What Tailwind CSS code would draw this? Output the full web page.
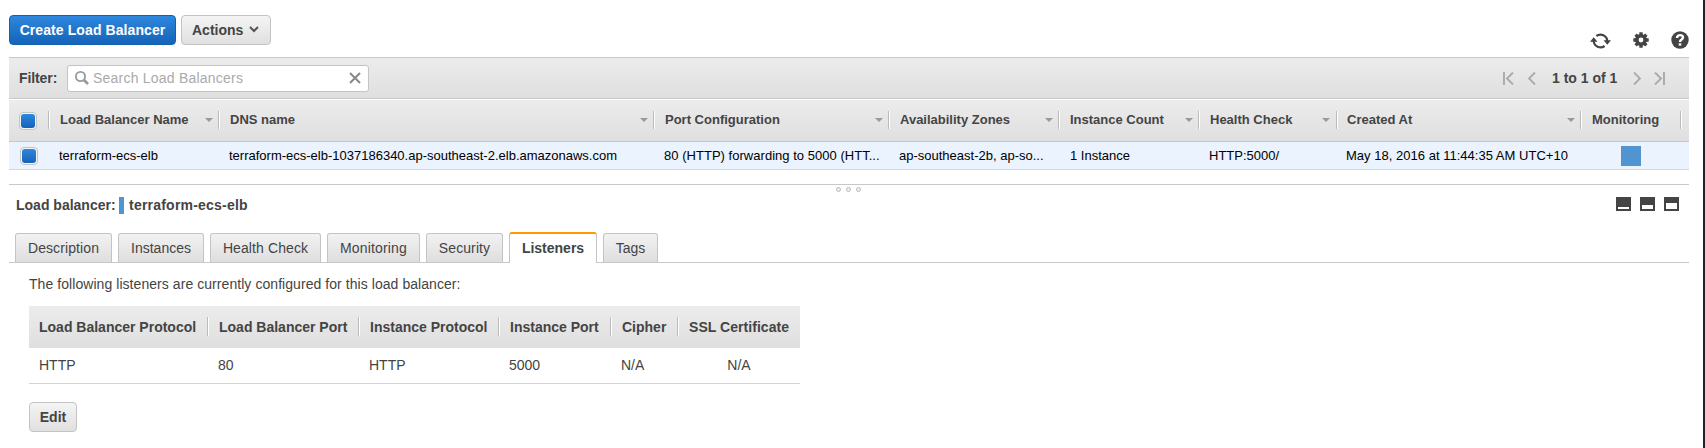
<!DOCTYPE html>
<html lang="en">
<head>
<meta charset="utf-8">
<title>Load Balancers</title>
<script src="https://cdn.jsdelivr.net/npm/@tailwindcss/browser@4"></script>
</head>
<body class="h-[448px] overflow-hidden bg-white font-['Liberation_Sans',Arial,sans-serif] text-[14px] leading-5 text-[#444]">
<div class="flex h-full flex-col whitespace-nowrap border-r-2 border-[#222] pl-[9px] pr-[14px]">

  <!-- Toolbar -->
  <header class="flex h-[57px] shrink-0 items-start justify-between">
    <div class="flex gap-[5px] pt-[15px] font-bold">
      <button class="h-[30px] w-[167px] rounded-[4px] border border-[#1360b0] bg-linear-to-b from-[#2e87de] to-[#1464b8] pb-px tracking-[0.09px] text-white">Create Load Balancer</button>
      <button class="flex h-[30px] w-[90px] items-center rounded-[4px] border border-[#c3c3c3] bg-linear-to-b from-[#f4f4f4] to-[#e0e0e0] pl-[10px]"><span class="w-[51px] text-left">Actions</span>
        <svg class="mb-[2px] ml-[6px] h-[7px] w-[10px]" viewBox="0 0 10 7" fill="none" stroke="#555" stroke-width="2"><path d="M1 1l4 4 4-4"/></svg>
      </button>
    </div>
    <div class="flex items-center pt-[31px]">
      <svg class="mt-px h-[18px] w-[21px]" viewBox="0 0 21 18"><g fill="none" stroke="#444" stroke-width="2.2"><path d="M6.400 4A6.800 6.800 0 0 1 17.300 9"/><path d="M14.600 14A6.800 6.800 0 0 1 3.700 9"/></g><path fill="#444" d="M13.500 8.300h7.500l-3.700 4.400zM0 9.700h7.500L3.700 5.300z"/></svg>
      <svg class="mb-[2px] ml-[22px] h-4 w-4" viewBox="0 0 16 16" fill="none" stroke="#444"><circle cx="8" cy="8" r="4.200" stroke-width="3.600"/><path stroke-width="3.400" d="M8 .3v3M8 12.700v3M.3 8h3M12.700 8h3M2.600 2.600l2 2M11.400 11.400l2 2M13.400 2.600l-2 2M4.600 11.400l-2 2"/></svg>
      <svg class="mb-px ml-[22px] h-[18px] w-[18px]" viewBox="0 0 18 18"><circle cx="9" cy="9" r="8.700" fill="#444"/><path fill="none" stroke="#fff" stroke-width="2.400" d="M6 7c0-4 6-3.600 6-.4 0 2-3 2-3 4.400"/><path fill="#fff" d="M7.700 12.300h2.600v2.300H7.700z"/></svg>
    </div>
  </header>

  <!-- Filter bar -->
  <section class="flex h-[42px] shrink-0 items-center justify-between border-y border-[#c8c8c8] bg-linear-to-b from-[#ececec] to-[#dfdfdf] font-bold">
    <div class="flex items-center pl-[10px]">
      <span class="w-[48px] tracking-[-0.1px]">Filter:</span>
      <div class="flex h-[27px] w-[302px] items-center rounded-[3px] border border-[#c4c4c4] bg-white px-[7px] font-normal text-[#aaa]">
        <svg class="h-[14px] w-[14px]" viewBox="0 0 14 14" fill="none" stroke="#999"><circle cx="5.500" cy="5.500" r="4.600" stroke-width="1.800"/><path stroke-width="2.600" d="M9 9l4 4"/></svg>
        <span class="ml-[4px] tracking-[0.22px]">Search Load Balancers</span>
        <svg class="ml-auto h-3 w-3" viewBox="0 0 12 12" stroke="#888" stroke-width="2"><path d="M1 1l10 10M11 1L1 11"/></svg>
      </div>
    </div>
    <div class="flex items-center pr-[24px]">
      <svg class="h-[13px] w-[11px]" viewBox="0 0 11 13" fill="none" stroke="#aaa" stroke-width="1.900"><path d="M1 0v13M10 .5l-6 6 6 6"/></svg>
      <svg class="ml-[14px] h-[13px] w-[8px]" viewBox="0 0 8 13" fill="none" stroke="#aaa" stroke-width="1.900"><path d="M7 .5l-6 6 6 6"/></svg>
      <span class="ml-[16px] w-[81px]">1 to 1 of 1</span>
      <svg class="h-[13px] w-[8px]" viewBox="0 0 8 13" fill="none" stroke="#aaa" stroke-width="1.900"><path d="M1 .5l6 6-6 6"/></svg>
      <svg class="ml-[13px] h-[13px] w-[11px]" viewBox="0 0 11 13" fill="none" stroke="#aaa" stroke-width="1.900"><path d="M10 0v13M1 .5l6 6-6 6"/></svg>
    </div>
  </section>

  <!-- Load balancer grid -->
  <section class="shrink-0 text-[13px]">
    <div class="grid h-[43px] grid-cols-[41px_170px_435px_235px_170px_140px_138px_244px_100px_7px] items-center border-b border-t border-b-[#c8c8c8] border-t-white bg-linear-to-b from-[#ececec] to-[#dfdfdf] pb-px font-bold leading-[18px]">
      <div class="flex h-[18px] items-center border-r border-white pl-[10px] shadow-[inset_-1px_0_#bbb]"><i class="mt-px h-[18px] w-[18px] shrink-0 rounded-[4px] border border-[#c4c4c4] bg-[#f4f4f4] p-px"><i class="block h-[14px] w-[14px] rounded-[3px] bg-linear-to-b from-[#2e87de] to-[#1464b8]"></i></i></div>
      <div class="flex h-[18px] items-center justify-between border-r border-white pl-[10px] pr-[6px] shadow-[inset_-1px_0_#bbb]"><span>Load Balancer Name</span><i class="border-x-4 border-t-4 border-x-transparent border-t-[#999]"></i></div>
      <div class="flex h-[18px] items-center justify-between border-r border-white pl-[10px] pr-[6px] shadow-[inset_-1px_0_#bbb]"><span>DNS name</span><i class="border-x-4 border-t-4 border-x-transparent border-t-[#999]"></i></div>
      <div class="flex h-[18px] items-center justify-between border-r border-white pl-[10px] pr-[6px] shadow-[inset_-1px_0_#bbb]"><span>Port Configuration</span><i class="border-x-4 border-t-4 border-x-transparent border-t-[#999]"></i></div>
      <div class="flex h-[18px] items-center justify-between border-r border-white pl-[10px] pr-[6px] shadow-[inset_-1px_0_#bbb]"><span>Availability Zones</span><i class="border-x-4 border-t-4 border-x-transparent border-t-[#999]"></i></div>
      <div class="flex h-[18px] items-center justify-between border-r border-white pl-[10px] pr-[6px] shadow-[inset_-1px_0_#bbb]"><span>Instance Count</span><i class="border-x-4 border-t-4 border-x-transparent border-t-[#999]"></i></div>
      <div class="flex h-[18px] items-center justify-between border-r border-white pl-[10px] pr-[7px] shadow-[inset_-1px_0_#bbb]"><span>Health Check</span><i class="border-x-4 border-t-4 border-x-transparent border-t-[#999]"></i></div>
      <div class="flex h-[18px] items-center justify-between border-r border-white pl-[9px] pr-[6px] shadow-[inset_-1px_0_#bbb]"><span>Created At</span><i class="border-x-4 border-t-4 border-x-transparent border-t-[#999]"></i></div>
      <div class="flex h-[18px] items-center border-r border-white pl-[10px] shadow-[inset_-1px_0_#bbb]"><span>Monitoring</span></div>
    </div>
    <div class="grid h-[28px] grid-cols-[41px_170px_435px_235px_170px_140px_138px_244px_100px_7px] items-center border-b border-[#d5d9df] bg-[#eaf3fe] text-black">
      <div class="flex pl-[11px]"><i class="h-[18px] w-[18px] rounded-[4px] border border-[#c4c4c4] bg-[#f4f4f4] p-px"><i class="block h-[14px] w-[14px] rounded-[3px] bg-linear-to-b from-[#2e87de] to-[#1464b8]"></i></i></div>
      <div class="pl-[9px]">terraform-ecs-elb</div>
      <div class="pl-[9px]">terraform-ecs-elb-1037186340.ap-southeast-2.elb.amazonaws.com</div>
      <div class="pl-[9px] tracking-[0.03px]">80 (HTTP) forwarding to 5000 (HTT...</div>
      <div class="pl-[9px]">ap-southeast-2b, ap-so...</div>
      <div class="pl-[10px]">1 Instance</div>
      <div class="pl-[9px]">HTTP:5000/</div>
      <div class="pl-[8px] tracking-[0.02px]">May 18, 2016 at 11:44:35 AM UTC+10</div>
      <div class="flex pl-[39px]"><i class="h-5 w-5 bg-[#5294cf]"></i></div>
    </div>
  </section>

  <!-- Pane splitter -->
  <div class="mt-[14px] flex h-[11px] shrink-0 justify-center gap-[5px] border-t border-[#c8c8c8] pr-px pt-[2px]">
    <i class="h-[5px] w-[5px] rounded-full border border-[#bbb] bg-[#eee]"></i><i class="h-[5px] w-[5px] rounded-full border border-[#bbb] bg-[#eee]"></i><i class="h-[5px] w-[5px] rounded-full border border-[#bbb] bg-[#eee]"></i>
  </div>

  <!-- Selected item -->
  <div class="flex h-[20px] shrink-0 items-center pl-[7px] pr-[10px] font-bold">
    <span class="w-[99px]">Load balancer:</span>
    <i class="ml-[4px] mr-[5px] h-[17px] w-[5px] bg-[#5294cf]"></i>
    <span class="tracking-[0.22px]">terraform-ecs-elb</span>
    <div class="ml-auto flex gap-[9px] pb-[2px]">
      <i class="h-[14px] w-[15px] bg-[#444] px-[2px] pt-[10px]"><i class="block h-[2px] bg-white"></i></i>
      <i class="h-[14px] w-[15px] bg-[#444] px-[2px] pt-[8px]"><i class="block h-[4px] bg-white"></i></i>
      <i class="h-[14px] w-[15px] bg-[#444] px-[2px] pt-[6px]"><i class="block h-[6px] bg-white"></i></i>
    </div>
  </div>

  <!-- Tabs -->
  <nav class="flex h-[48px] shrink-0 items-end gap-[6px] border-b border-[#c8c8c8] pl-[6px] text-center">
    <a class="h-[29px] w-[97px] rounded-t-[3px] border border-b-0 border-[#c4c4c4] bg-linear-to-b from-[#f2f2f2] to-[#dedede] pt-[4px] tracking-[0.1px]">Description</a>
    <a class="h-[29px] w-[86px] rounded-t-[3px] border border-b-0 border-[#c4c4c4] bg-linear-to-b from-[#f2f2f2] to-[#dedede] pt-[4px]">Instances</a>
    <a class="h-[29px] w-[111px] rounded-t-[3px] border border-b-0 border-[#c4c4c4] bg-linear-to-b from-[#f2f2f2] to-[#dedede] pt-[4px] tracking-[0.1px]">Health Check</a>
    <a class="h-[29px] w-[93px] rounded-t-[3px] border border-b-0 border-[#c4c4c4] bg-linear-to-b from-[#f2f2f2] to-[#dedede] pt-[4px] tracking-[0.15px]">Monitoring</a>
    <a class="h-[29px] w-[77px] rounded-t-[3px] border border-b-0 border-[#c4c4c4] bg-linear-to-b from-[#f2f2f2] to-[#dedede] pt-[4px] tracking-[0.1px]">Security</a>
    <a class="-mb-px h-[31px] w-[88px] rounded-t-[3px] border-x border-t-2 border-x-[#c4c4c4] border-t-[#f90] bg-white pt-[4px] font-bold">Listeners</a>
    <a class="h-[29px] w-[55px] rounded-t-[3px] border border-b-0 border-[#c4c4c4] bg-linear-to-b from-[#f2f2f2] to-[#dedede] pt-[4px]">Tags</a>
  </nav>

  <!-- Listeners -->
  <main class="pl-[20px] pt-[11px]">
    <p class="tracking-[0.06px]">The following listeners are currently configured for this load balancer:</p>
    <div class="mt-[12px] w-[771px]">
      <div class="grid h-[42px] grid-cols-[180px_151px_140px_112px_67px_121px] items-center bg-linear-to-b from-[#ececec] to-[#dfdfdf] pb-px font-bold leading-[21px]">
        <div class="h-[19px] border-r border-white pl-[10px] shadow-[inset_-1px_0_#bbb]">Load Balancer Protocol</div>
        <div class="h-[19px] border-r border-white pl-[10px] shadow-[inset_-1px_0_#bbb]">Load Balancer Port</div>
        <div class="h-[19px] border-r border-white pl-[10px] shadow-[inset_-1px_0_#bbb]">Instance Protocol</div>
        <div class="h-[19px] border-r border-white pl-[10px] shadow-[inset_-1px_0_#bbb]">Instance Port</div>
        <div class="h-[19px] border-r border-white pl-[10px] shadow-[inset_-1px_0_#bbb]">Cipher</div>
        <div class="h-[19px] pl-[10px] tracking-[0.05px]">SSL Certificate</div>
      </div>
      <div class="grid h-[36px] grid-cols-[180px_151px_140px_112px_67px_121px] items-center border-b border-[#d5d5d5] pb-[2px]">
        <div class="pl-[10px]">HTTP</div>
        <div class="pl-[9px]">80</div>
        <div class="pl-[9px]">HTTP</div>
        <div class="pl-[9px]">5000</div>
        <div class="pl-[9px]">N/A</div>
        <div class="pr-px text-center">N/A</div>
      </div>
    </div>
    <button class="mt-[18px] h-[30px] w-[48px] rounded-[4px] border border-[#c3c3c3] bg-linear-to-b from-[#f4f4f4] to-[#e0e0e0] font-bold">Edit</button>
  </main>
</div>
</body>
</html>
